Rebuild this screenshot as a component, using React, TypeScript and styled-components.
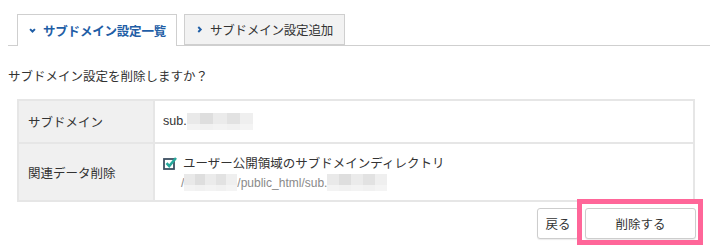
import React from 'react'
import styled, { createGlobalStyle } from 'styled-components'

const GlobalStyle = createGlobalStyle`
  html, body {
    margin: 0;
    padding: 0;
    background: #fff;
  }
  body {
    font-family: "Liberation Sans", "Noto Sans CJK JP", sans-serif;
    font-size: 12.5px;
    color: #333;
  }
`

const Page = styled.div`
  width: 710px;
  height: 251px;
  padding: 14px 0 0 8px;
  box-sizing: border-box;
  overflow: hidden;
`

const TabBar = styled.div`
  display: flex;
  gap: 7px;
  padding-left: 9px;
  border-bottom: 1px solid #cfcfcf;
  height: 31px;
`

const Tab = styled.div<{ $active?: boolean }>`
  display: flex;
  align-items: center;
  gap: 7px;
  box-sizing: border-box;
  height: ${p => (p.$active ? '32px' : '31px')};
  padding: 0 0 0 11px;
  width: ${p => (p.$active ? '160px' : '161px')};
  border: 1px solid #cfcfcf;
  border-bottom: ${p => (p.$active ? 'none' : '1px solid #cfcfcf')};
  background: ${p => (p.$active ? '#fff' : '#f2f2f2')};
  color: ${p => (p.$active ? '#1f5ea6' : '#333')};
  font-weight: ${p => (p.$active ? 700 : 400)};
  font-size: 12.5px;
  letter-spacing: -0.2px;
  position: relative;
  z-index: 1;
`

const Chevron = styled.svg`
  width: 7px;
  height: 7px;
  flex: none;
`

const Question = styled.p`
  margin: 21px 0 0;
  line-height: 20px;
  font-size: 12.5px;
`

const Table = styled.table`
  margin: 12px 15px 0 9px;
  width: 678px;
  border-collapse: collapse;
  font-size: 12.5px;
  td, th {
    border: 2px solid #e6e6e6;
    text-align: left;
    vertical-align: middle;
  }
`

const Head = styled.th<{ $h: number }>`
  width: 136px;
  height: ${p => p.$h}px;
  box-sizing: border-box;
  background: #f0f0f0;
  font-weight: 400;
  padding: 0 0 0 9px;
`

const Cell = styled.td`
  padding: 0 0 0 8px;
`

const Mosaic = styled.span<{ $w: number }>`
  display: inline-block;
  vertical-align: middle;
  width: ${p => p.$w}px;
  height: 17px;
  background:
    linear-gradient(90deg, #e9e9e9 0 20%, #dedede 20% 40%, #ebebeb 40% 60%, #e2e2e2 60% 80%, #efefef 80%),
    #eee;
  position: relative;
  &::after {
    content: '';
    position: absolute;
    left: 0;
    right: 0;
    bottom: 0;
    height: 6px;
    background: rgba(245, 245, 245, 0.8);
  }
`

const CheckLine = styled.div`
  display: flex;
  align-items: center;
  gap: 6px;
  font-size: 12.5px;
`

const Path = styled.div`
  display: flex;
  align-items: center;
  margin: 2px 0 0 18px;
  color: #8a8a8a;
  font-size: 12px;
`

const Actions = styled.div`
  display: flex;
  justify-content: flex-end;
  gap: 6px;
  margin: 6px 14px 0 0;
`

const Button = styled.button<{ $wide?: boolean }>`
  height: 31px;
  width: ${p => (p.$wide ? '111px' : '42px')};
  box-sizing: border-box;
  border: 1px solid #cdcdcd;
  border-radius: 3px;
  background: #fff;
  box-shadow: 0 1px 1px rgba(0, 0, 0, 0.08);
  font-family: inherit;
  font-size: 12.5px;
  color: #333;
  padding: 0;
`

const Highlight = styled.span`
  position: relative;
  display: inline-flex;
  &::after {
    content: '';
    position: absolute;
    left: -8px;
    right: -7px;
    top: -9px;
    bottom: -6px;
    border: 5px solid #ff6699;
    pointer-events: none;
  }
`

export default function App() {
  return (
    <>
      <GlobalStyle />
      <Page>
        <TabBar>
          <Tab $active>
            <Chevron viewBox="0 0 8 8">
              <path d="M1.2 2.4 L4 5.2 L6.8 2.4" fill="none" stroke="#1f5ea6" strokeWidth="2.2" />
            </Chevron>
            サブドメイン設定一覧
          </Tab>
          <Tab>
            <Chevron viewBox="0 0 8 8">
              <path d="M2.6 1.2 L5.4 4 L2.6 6.8" fill="none" stroke="#1f5ea6" strokeWidth="2.2" />
            </Chevron>
            サブドメイン設定追加
          </Tab>
        </TabBar>
        <Question>サブドメイン設定を削除しますか？</Question>
        <Table>
          <tbody>
            <tr>
              <Head $h={43}>サブドメイン</Head>
              <Cell>
                sub.<Mosaic $w={66} />
              </Cell>
            </tr>
            <tr>
              <Head $h={58}>関連データ削除</Head>
              <Cell>
                <CheckLine>
                  <svg width="14" height="14" viewBox="0 0 14 14">
                    <rect x="1" y="3" width="10" height="10" fill="none" stroke="#3e5062" strokeWidth="1.8" />
                    <path d="M3.5 7.2 L6.2 10 L13 2" fill="none" stroke="#27a89c" strokeWidth="2.6" />
                  </svg>
                  ユーザー公開領域のサブドメインディレクトリ
                </CheckLine>
                <Path>
                  /<Mosaic $w={53} />/public_html/sub.<Mosaic $w={60} />
                </Path>
              </Cell>
            </tr>
          </tbody>
        </Table>
        <Actions>
          <Button>戻る</Button>
          <Highlight>
            <Button $wide>削除する</Button>
          </Highlight>
        </Actions>
      </Page>
    </>
  )
}
